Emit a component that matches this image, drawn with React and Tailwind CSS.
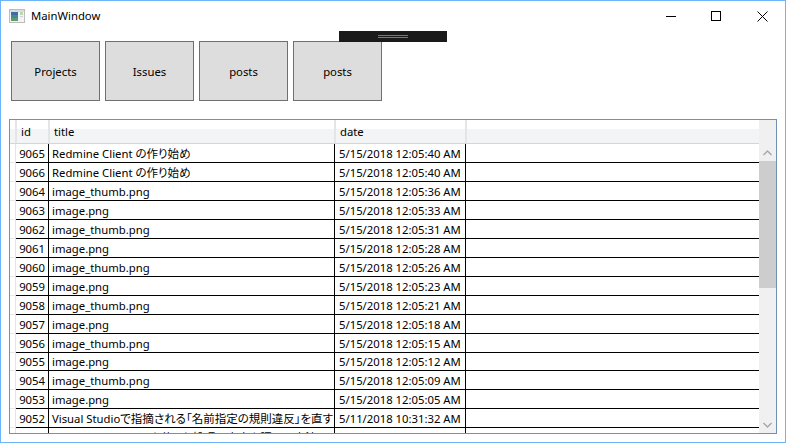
const rows = [
  { id: 9065, title: 'Redmine Client の作り始め', date: '5/15/2018 12:05:40 AM' },
  { id: 9066, title: 'Redmine Client の作り始め', date: '5/15/2018 12:05:40 AM' },
  { id: 9064, title: 'image_thumb.png', date: '5/15/2018 12:05:36 AM' },
  { id: 9063, title: 'image.png', date: '5/15/2018 12:05:33 AM' },
  { id: 9062, title: 'image_thumb.png', date: '5/15/2018 12:05:31 AM' },
  { id: 9061, title: 'image.png', date: '5/15/2018 12:05:28 AM' },
  { id: 9060, title: 'image_thumb.png', date: '5/15/2018 12:05:26 AM' },
  { id: 9059, title: 'image.png', date: '5/15/2018 12:05:23 AM' },
  { id: 9058, title: 'image_thumb.png', date: '5/15/2018 12:05:21 AM' },
  { id: 9057, title: 'image.png', date: '5/15/2018 12:05:18 AM' },
  { id: 9056, title: 'image_thumb.png', date: '5/15/2018 12:05:15 AM' },
  { id: 9055, title: 'image.png', date: '5/15/2018 12:05:12 AM', short: true },
  { id: 9054, title: 'image_thumb.png', date: '5/15/2018 12:05:09 AM' },
  { id: 9053, title: 'image.png', date: '5/15/2018 12:05:05 AM' },
  { id: 9052, title: 'Visual Studioで指摘される「名前指定の規則違反」を直す', date: '5/11/2018 10:31:32 AM' },
  { id: 9051, title: 'mscorsvw.exe run を使った処理の内容を調べる方法について詳しく', date: '5/11/2018 10:31:30 AM' },
]

function Title({ text }) {
  // latin runs stay small, japanese runs get their own size and proportional kana
  const parts = text.split(/([^\x00-\x7f]+)/)
  return (
    <span>
      {parts.map((part, i) =>
        i % 2 === 1 ? (
          <span key={i} className="text-[11.5px] [font-feature-settings:'palt']">{part}</span>
        ) : (
          part
        )
      )}
    </span>
  )
}

function AppIcon() {
  return (
    <svg width="16" height="16" viewBox="0 0 16 16" className="shrink-0">
      <rect x="0.5" y="1.5" width="15" height="13" fill="#f4f4f4" stroke="#bcbcbc" />
      <rect x="1" y="2" width="14" height="2" fill="#dcdcdc" />
      <rect x="2" y="4" width="7" height="9" fill="#3f8a9c" />
      <rect x="2" y="4" width="7" height="3" fill="#3a6ea5" />
      <rect x="2" y="10" width="7" height="3" fill="#5f9a6a" />
      <rect x="11" y="4" width="3" height="3" fill="#b8d8b0" />
      <rect x="11" y="8" width="3" height="1" fill="#cfcfcf" />
    </svg>
  )
}

function WindowControls() {
  return (
    <div className="flex items-center">
      <svg width="10" height="10" viewBox="0 0 10 10" className="mr-[35px]">
        <path d="M0 5.5H10" stroke="#000" fill="none" />
      </svg>
      <svg width="10" height="10" viewBox="0 0 10 10" className="mr-[36px]">
        <rect x="0.5" y="0.5" width="9" height="9" stroke="#000" fill="none" />
      </svg>
      <svg width="11" height="11" viewBox="0 0 11 11">
        <path d="M0.5 0.5L10.5 10.5M10.5 0.5L0.5 10.5" stroke="#000" fill="none" />
      </svg>
    </div>
  )
}

function ToolButton({ label }) {
  return (
    <button className="w-[89px] h-[60px] pt-[2px] bg-[#dddddd] border border-[#707070] text-black">
      {label}
    </button>
  )
}

function Row({ row }) {
  return (
    <div className={`flex ${row.short ? 'h-[18px]' : 'h-[19px]'} shrink-0`}>
      <div className="w-[6px] border-r border-b border-r-[#e4e4e4] border-b-[#e8e8e8]" />
      <div className="flex flex-1 border-b border-black">
        <div className="w-[33px] border-r border-black pr-[3px] pt-[2px] flex items-center justify-end">{row.id}</div>
        <div className="w-[286px] border-r border-black pl-[3px] pt-[2px] flex items-center overflow-hidden whitespace-nowrap">
          <Title text={row.title} />
        </div>
        <div className="w-[131px] border-r border-black pl-[4px] pt-[2px] flex items-center overflow-hidden whitespace-nowrap">{row.date}</div>
      </div>
    </div>
  )
}

function Scrollbar() {
  return (
    <div className="w-[17px] bg-[#f0f0f0] flex flex-col items-center shrink-0">
      <div className="h-[41px] w-full flex items-end justify-center pb-[5px]">
        <svg width="9" height="6" viewBox="0 0 9 6">
          <path d="M0.5 5L4.5 1L8.5 5" stroke="#a6a6a6" strokeWidth="1.4" fill="none" />
        </svg>
      </div>
      <div className="h-[127px] w-full bg-[#cdcdcd]" />
      <div className="flex-1 w-full flex items-end justify-center pb-[5px]">
        <svg width="9" height="6" viewBox="0 0 9 6">
          <path d="M0.5 1L4.5 5L8.5 1" stroke="#a6a6a6" strokeWidth="1.4" fill="none" />
        </svg>
      </div>
    </div>
  )
}

export default function App() {
  return (
    <div className="relative w-[786px] h-[443px] bg-white border border-[#6cb5f9] text-[11.3px] text-black overflow-hidden font-['Noto_Sans','Noto_Sans_CJK_JP',sans-serif]">
      {/* title bar */}
      <div className="h-[30px] flex items-center justify-between pl-[8px] pr-[17px]">
        <div className="flex items-center gap-[6px]">
          <AppIcon />
          <span>MainWindow</span>
        </div>
        <WindowControls />
      </div>

      {/* buttons */}
      <div className="flex gap-[5px] pl-[10px] pt-[10px]">
        <ToolButton label="Projects" />
        <ToolButton label="Issues" />
        <ToolButton label="posts" />
        <ToolButton label="posts" />
      </div>

      {/* designer grip, lies over the buttons */}
      <div className="absolute left-[338px] top-[30px] w-[108px] h-[11px] bg-[#1a1a1a] flex flex-col items-center justify-center gap-[1px]">
        <div className="w-[30px] h-px bg-[#777777]" />
        <div className="w-[30px] h-px bg-[#777777]" />
      </div>

      {/* grid */}
      <div className="ml-[8px] mt-[18px] w-[768px] h-[315px] border border-[#7190b6] flex overflow-hidden">
        <div className="flex-1 flex flex-col min-w-0">
          <div className="flex h-[24px] shrink-0 border-b border-[#d5d5d5] bg-linear-to-b from-white from-[40%] to-[#f3f4f6] to-[40%]">
            <div className="w-[6px] border-r border-[#e4e5e7]" />
            <div className="w-[33px] border-x border-[#e4e5e7] pl-[4px] pt-[2px] flex items-center">id</div>
            <div className="w-[286px] border-x border-[#e4e5e7] pl-[4px] pt-[2px] flex items-center">title</div>
            <div className="w-[131px] border-x border-[#e4e5e7] pl-[4px] pt-[2px] flex items-center">date</div>
            <div className="flex-1 border-l border-[#e4e5e7]" />
          </div>
          {rows.map((row) => (
            <Row key={row.id} row={row} />
          ))}
        </div>
        <Scrollbar />
      </div>
    </div>
  )
}
